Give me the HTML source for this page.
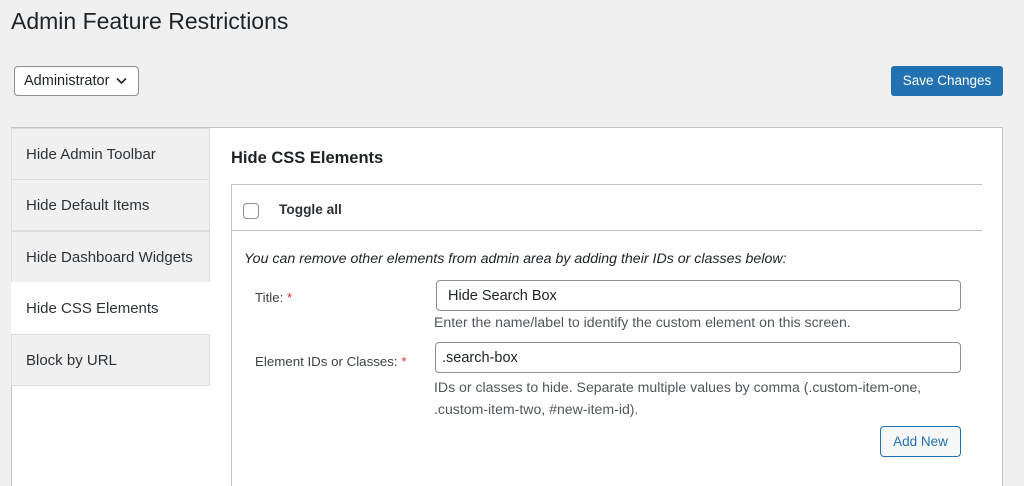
<!DOCTYPE html><html><head><style>
html,body{margin:0;width:1024px;height:486px;overflow:hidden}
body{background:#f0f0f1;font-family:"Liberation Sans",sans-serif;color:#1d2327;position:relative;font-size:14px}
.a{position:absolute}
h1{position:absolute;left:11px;top:8px;margin:0;font-size:23px;font-weight:400;color:#1d2327}
.sel{left:14px;top:66px;width:125px;height:30px;border:1px solid #8c8f94;border-radius:4px;background:#fff;box-sizing:border-box;padding:6px 0 0 9px;font-size:14.5px}
.btn{left:891px;top:66px;width:112px;height:30px;background:#2271b1;border-radius:3px;color:#fff;font-size:13.5px;text-align:center;line-height:30px}
.panel{left:11px;top:127px;width:992px;height:359px;background:#fff;border:1px solid #c3c4c7;border-bottom:none;box-sizing:border-box}
.tab{left:11px;width:199px;height:52px;background:#f0f0f1;border:1px solid #dcdcde;box-sizing:border-box;padding-left:14px;line-height:51px;font-size:15px;color:#2c3338}
.box{left:231px;top:184px;width:751px;height:302px;border:1px solid #c3c4c7;border-right:none;border-bottom:none;box-sizing:border-box}
.inp{height:31px;border:1px solid #8c8f94;border-radius:4px;box-sizing:border-box;background:#fff;padding:0 11px;line-height:30px;font-size:14.5px}
.d{font-size:14.1px;color:#50575e}
.lab{font-size:13.3px;color:#3c434a}
.r{color:#d63638}
</style></head><body>
<h1>Admin Feature Restrictions</h1>
<div class="a sel">Administrator <svg width="11" height="8" style="margin-left:3px" viewBox="0 0 11 8"><path d="M1 1.5l4.5 4.5 4.5-4.5" stroke="#1d2327" stroke-width="1.6" fill="none"/></svg></div>
<div class="a btn">Save Changes</div>
<div class="a panel"></div>
<div class="a tab" style="top:128px">Hide Admin Toolbar</div>
<div class="a tab" style="top:179px">Hide Default Items</div>
<div class="a tab" style="top:231px">Hide Dashboard Widgets</div>
<div class="a tab" style="top:282px;background:#fff;border-color:#fff;width:200px">Hide CSS Elements</div>
<div class="a tab" style="top:334px">Block by URL</div>
<div class="a" style="left:231px;top:149px;font-size:16.5px;font-weight:700">Hide CSS Elements</div>
<div class="a box"></div>
<div class="a" style="left:231px;top:230px;width:751px;height:1px;background:#c3c4c7"></div>
<div class="a" style="left:243px;top:203px;width:16px;height:16px;border:1px solid #8c8f94;border-radius:4px;box-sizing:border-box"></div>
<div class="a" style="left:279px;top:202px;font-size:13.7px;font-weight:700;color:#2c3338">Toggle all</div>
<div class="a" style="left:244px;top:251px;font-size:14.2px;font-style:italic;color:#1d2327">You can remove other elements from admin area by adding their IDs or classes below:</div>
<div class="a lab" style="left:255px;top:290px">Title: <span class="r">*</span></div>
<div class="a lab" style="left:255px;top:354px">Element IDs or Classes: <span class="r">*</span></div>
<div class="a inp" style="left:436px;top:280px;width:525px">Hide Search Box</div>
<div class="a d" style="left:434px;top:314px">Enter the name/label to identify the custom element on this screen.</div>
<div class="a inp" style="left:435px;top:342px;width:526px;padding-left:6px">.search-box</div>
<div class="a d" style="left:434px;top:376px;line-height:22px">IDs or classes to hide. Separate multiple values by comma (.custom-item-one,<br>.custom-item-two, #new-item-id).</div>
<div class="a" style="left:880px;top:426px;width:81px;height:31px;border:1px solid #2271b1;border-radius:4px;box-sizing:border-box;background:#f6f7f7;color:#2271b1;font-size:13.5px;text-align:center;line-height:29px">Add New</div>
</body></html>
